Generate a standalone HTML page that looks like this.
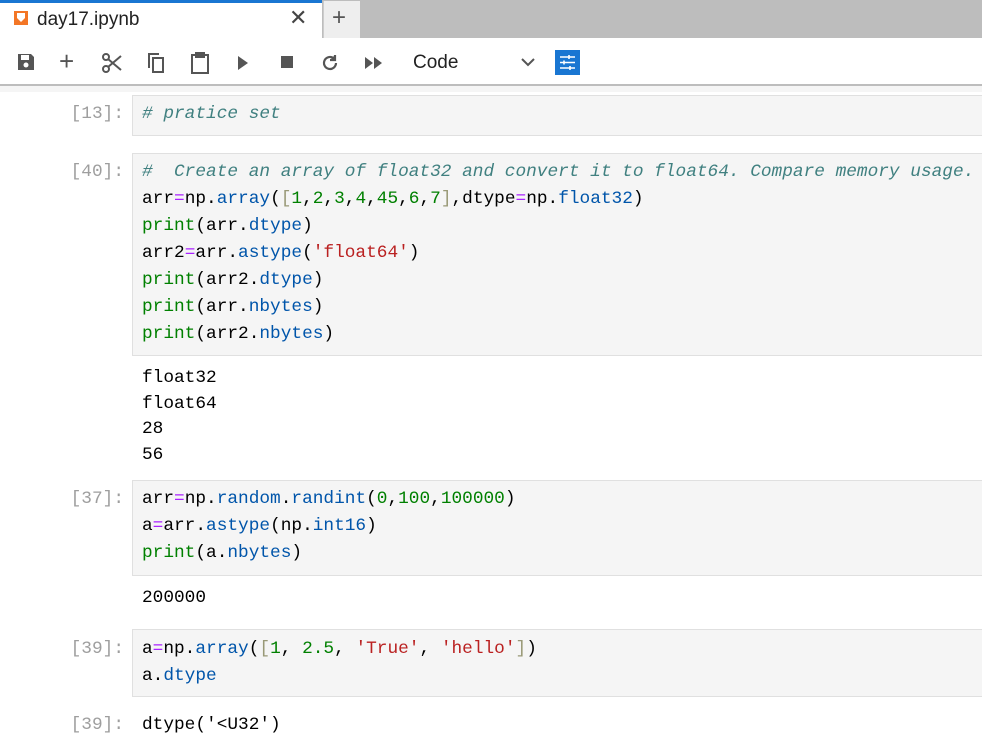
<!DOCTYPE html>
<html><head><meta charset="utf-8"><style>
body{margin:0;width:982px;height:748px;overflow:hidden;background:#fff;font-family:"Liberation Sans",sans-serif;position:relative}
.abs{position:absolute}
.mono{font-family:"Liberation Mono","DejaVu Sans Mono",monospace;font-size:17.8px;white-space:pre;margin-top:2px}
.box{position:absolute;left:132px;right:-2px;background:#f5f5f5;border:1px solid #e0e0e0}
.pr{position:absolute;right:858px;color:#9e9e9e;text-align:right}
.ln{position:absolute;left:142px}
.c{color:#408080;font-style:italic}.k{color:#008000}.a{color:#0055aa}.o{color:#aa22ff}.b{color:#999977}.n{color:#008000}.s{color:#ba2121}
.ic{position:absolute;top:52px}
</style></head><body>
<div class="abs" style="left:0;top:0;width:982px;height:38px;background:#bdbdbd"></div>
<div class="abs" style="left:0;top:0;width:322px;height:38px;background:#fff;border-top:3px solid #1976d2;box-sizing:border-box"></div>
<div class="abs" style="left:323px;top:1px;width:36px;height:37px;background:#eee;border-left:1px solid #ccc"></div>
<div class="abs" style="left:332px;top:4px;font-size:24px;color:#555">+</div>
<div class="abs" style="left:14px;top:11px;width:14px;height:14px;background:#f37626"><div style="position:absolute;left:3px;top:2px;width:8px;height:9px;background:#fff"></div><div style="position:absolute;left:3px;top:7px;width:0;height:0;border-left:4px solid #f37626;border-right:4px solid #f37626;border-top:4px solid transparent"></div></div>
<div class="abs" style="left:37px;top:9px;font-size:19px;color:#222">day17.ipynb</div>
<div class="abs" style="left:289px;top:5px;font-size:22px;color:#444">✕</div>
<div class="abs" style="left:0;top:84px;width:982px;height:2px;background:#bdbdbd"></div>
<div class="abs" style="left:0;top:86px;width:982px;height:6px;background:#f5f5f5"></div>
<svg class="ic" style="left:16px" width="20" height="20" viewBox="0 0 20 20"><path d="M2 2h13l3 3v13H2z" fill="#555"/><rect x="5" y="3" width="8" height="5" fill="#fff"/><circle cx="10" cy="13" r="2.5" fill="#fff"/></svg>
<div class="abs" style="left:59px;top:46px;font-size:26px;color:#555">+</div>
<svg class="ic" style="left:101px" width="22" height="22" viewBox="0 0 22 22" fill="none" stroke="#555" stroke-width="2"><circle cx="5" cy="5" r="3"/><circle cx="5" cy="17" r="3"/><path d="M7 7l13 11M7 15L20 4"/></svg>
<svg class="ic" style="left:146px" width="20" height="22" viewBox="0 0 20 22" fill="none" stroke="#555" stroke-width="2"><path d="M3 16V2h10"/><rect x="7" y="6" width="10" height="14"/></svg>
<svg class="ic" style="left:190px" width="20" height="22" viewBox="0 0 20 22" fill="none" stroke="#555" stroke-width="2"><rect x="2" y="3" width="16" height="18"/><rect x="6" y="1" width="8" height="4" fill="#555"/></svg>
<svg class="ic" style="left:236px;top:55px" width="14" height="16"><path d="M2 1l10 7-10 7z" fill="#555"/></svg>
<div class="abs" style="left:281px;top:56px;width:12px;height:12px;background:#555"></div>
<svg class="ic" style="left:320px;top:53px" width="20" height="20" viewBox="0 0 20 20" fill="none" stroke="#555" stroke-width="2.2"><path d="M16 10a6 6 0 1 1-2-4.5"/><path d="M15 2v5h-5" fill="#555"/></svg>
<svg class="ic" style="left:364px;top:56px" width="20" height="14"><path d="M1 1l8 6-8 6zM10 1l8 6-8 6z" fill="#555"/></svg>
<div class="abs" style="left:413px;top:52px;font-size:19px;color:#222">Code</div>
<svg class="abs" style="left:520px;top:56px" width="16" height="12"><path d="M2 3l6 6 6-6" fill="none" stroke="#555" stroke-width="2"/></svg>
<div class="abs" style="left:555px;top:50px;width:25px;height:25px;background:#1976d2"><svg width="25" height="25" fill="none" stroke="#fff" stroke-width="1.6"><path d="M5 7h15M5 12.5h15M5 18h15"/><path d="M14 5v4M9 10.5v4M15 16v4"/></svg></div>

<div class="box" style="top:95px;height:39px"></div>
<div class="pr mono" style="top:102px">[13]:</div>
<div class="ln mono c" style="top:102px"># pratice set</div>

<div class="box" style="top:153px;height:201px"></div>
<div class="pr mono" style="top:160px">[40]:</div>
<div class="ln mono" style="top:160px"><span class="c">#  Create an array of float32 and convert it to float64. Compare memory usage.</span></div>
<div class="ln mono" style="top:187px">arr<span class="o">=</span>np<span>.</span><span class="a">array</span>(<span class="b">[</span><span class="n">1</span>,<span class="n">2</span>,<span class="n">3</span>,<span class="n">4</span>,<span class="n">45</span>,<span class="n">6</span>,<span class="n">7</span><span class="b">]</span>,dtype<span class="o">=</span>np.<span class="a">float32</span>)</div>
<div class="ln mono" style="top:214px"><span class="k">print</span>(arr.<span class="a">dtype</span>)</div>
<div class="ln mono" style="top:241px">arr2<span class="o">=</span>arr.<span class="a">astype</span>(<span class="s">'float64'</span>)</div>
<div class="ln mono" style="top:268px"><span class="k">print</span>(arr2.<span class="a">dtype</span>)</div>
<div class="ln mono" style="top:295px"><span class="k">print</span>(arr.<span class="a">nbytes</span>)</div>
<div class="ln mono" style="top:322px"><span class="k">print</span>(arr2.<span class="a">nbytes</span>)</div>
<div class="ln mono" style="top:364px;line-height:25.5px">float32
float64
28
56</div>

<div class="box" style="top:480px;height:94px"></div>
<div class="pr mono" style="top:487px">[37]:</div>
<div class="ln mono" style="top:487px">arr<span class="o">=</span>np.<span class="a">random</span>.<span class="a">randint</span>(<span class="n">0</span>,<span class="n">100</span>,<span class="n">100000</span>)</div>
<div class="ln mono" style="top:514px">a<span class="o">=</span>arr.<span class="a">astype</span>(np.<span class="a">int16</span>)</div>
<div class="ln mono" style="top:541px"><span class="k">print</span>(a.<span class="a">nbytes</span>)</div>
<div class="ln mono" style="top:586px">200000</div>

<div class="box" style="top:629px;height:66px"></div>
<div class="pr mono" style="top:637px">[39]:</div>
<div class="ln mono" style="top:637px">a<span class="o">=</span>np.<span class="a">array</span>(<span class="b">[</span><span class="n">1</span>, <span class="n">2.5</span>, <span class="s">'True'</span>, <span class="s">'hello'</span><span class="b">]</span>)</div>
<div class="ln mono" style="top:664px">a.<span class="a">dtype</span></div>
<div class="pr mono" style="top:713px">[39]:</div>
<div class="ln mono" style="top:713px">dtype('&lt;U32')</div>
</body></html>
